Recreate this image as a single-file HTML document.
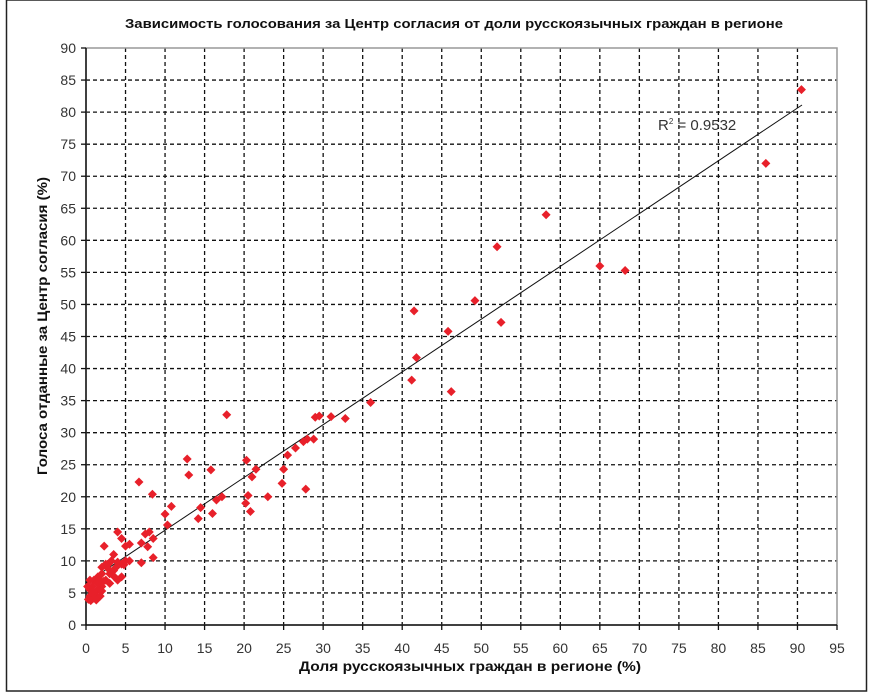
<!DOCTYPE html>
<html><head><meta charset="utf-8"><style>
html,body{margin:0;padding:0;background:#fff;}
svg{display:block;}
text{font-family:"Liberation Sans",Arial,sans-serif;}
</style></head><body>
<svg id="s" width="869" height="697" viewBox="0 0 869 697" xmlns="http://www.w3.org/2000/svg">
<rect x="6.5" y="0" width="860" height="691" fill="#fff" stroke="#222" stroke-width="1.5"/>
<text x="454" y="28" text-anchor="middle" font-size="13" font-weight="bold" fill="#111" textLength="658" lengthAdjust="spacingAndGlyphs">Зависимость голосования за Центр согласия от доли русскоязычных граждан в регионе</text>
<g id="grid"></g>
<rect x="86" y="48" width="751" height="577" fill="none" stroke="#999" stroke-width="1.5"/>
<line x1="86" y1="48" x2="86" y2="625" stroke="#111" stroke-width="1.5"/>
<line x1="86" y1="625" x2="837" y2="625" stroke="#111" stroke-width="1.5"/>
<g id="ticks"></g>
<line x1="86" y1="583" x2="802" y2="105" stroke="#111" stroke-width="1"/>
<g id="pts" fill="#e8202a"></g>
<text x="658" y="130" font-size="15" fill="#333">R<tspan dy="-6" font-size="8">2</tspan><tspan dy="6"> = 0.9532</tspan></text>
<text x="470" y="671" text-anchor="middle" font-size="14" font-weight="bold" fill="#111" textLength="342" lengthAdjust="spacingAndGlyphs">Доля русскоязычных граждан в регионе (%)</text>
<text transform="translate(47,326) rotate(-90)" text-anchor="middle" font-size="14" font-weight="bold" fill="#111" textLength="298" lengthAdjust="spacingAndGlyphs">Голоса отданные за Центр согласия (%)</text>
</svg>
<script>
var NS="http://www.w3.org/2000/svg";
function el(t,a,p,txt){var e=document.createElementNS(NS,t);for(var k in a)e.setAttribute(k,a[k]);if(txt!==undefined)e.textContent=txt;document.getElementById(p).appendChild(e);}
function X(v){return 86+v*751/95;}function Y(v){return 625-v*577/90;}
for(var i=1;i<19;i++){el('line',{x1:X(i*5),y1:48,x2:X(i*5),y2:625,stroke:'#111','stroke-width':1.3,'stroke-dasharray':'4,3'},'grid');}
for(var j=1;j<18;j++){el('line',{x1:86,y1:Y(j*5),x2:837,y2:Y(j*5),stroke:'#111','stroke-width':1.3,'stroke-dasharray':'4,3'},'grid');}
for(var i=0;i<=19;i++){el('line',{x1:X(i*5),y1:625,x2:X(i*5),y2:630,stroke:'#111','stroke-width':1.3},'ticks');el('text',{x:X(i*5),y:653,'text-anchor':'middle','font-size':14,fill:'#333'},'ticks',String(i*5));}
for(var j=0;j<=18;j++){el('line',{x1:81,y1:Y(j*5),x2:86,y2:Y(j*5),stroke:'#111','stroke-width':1.3},'ticks');el('text',{x:76,y:Y(j*5)+5,'text-anchor':'end','font-size':14,fill:'#333'},'ticks',String(j*5));}
var d=[[90.5,83.5],[86,72],[68.2,55.3],[65,56],[58.2,64],[52,59],[52.5,47.2],[49.2,50.6],[45.8,45.8],[41.5,49],[41.8,41.7],[41.2,38.2],[46.2,36.4],[36,34.7],[32.8,32.2],[31,32.5],[29.5,32.6],[29,32.4],[28.8,29],[28,29],[27.5,28.6],[26.5,27.6],[25.5,26.5],[25,24.3],[24.8,22.1],[23,20],[27.8,21.2],[21.5,24.3],[21,23.1],[20.3,25.7],[20.5,20.2],[20.2,19],[20.8,17.7],[17.8,32.8],[17.2,20],[16.5,19.5],[15.8,24.2],[16,17.4],[14.5,18.3],[14.2,16.6],[12.8,25.9],[13,23.4],[10.8,18.5],[10,17.3],[10.3,15.6],[8.4,20.4],[6.7,22.3],[7.5,14.2],[8,14.5],[8.5,13.5],[7.8,12.2],[7,12.8],[8.5,10.5],[7,9.7],[5.5,12.6],[5,12.3],[4.5,13.5],[4,14.5],[3.5,11],[2.3,12.3],[5,10],[4.5,9.5],[4,9.8],[3,9.7],[2.5,9.5],[2,9],[3.5,8.5],[3,8],[2,8],[1.5,7.5],[1,7],[0.5,7],[4,7],[4.5,7.5],[3,6.5],[2,6],[1.5,5.5],[1,5],[0.5,4.5],[0.3,4],[1,4.2],[0.5,5.5],[0.2,6],[1.5,6.5],[2.5,7],[0.8,6],[1.2,4.6],[2.8,8.8],[3.2,10],[3.8,9],[4.8,9.4],[5.5,10],[1.8,4.5],[0.6,3.8],[2,5.3],[1.3,3.9],[2.2,6.8],[1.7,7],[0.9,5.2],[3.6,7.5]];
d.forEach(function(p){var x=X(p[0]),y=Y(p[1]);el('path',{d:'M'+x+' '+(y-4.5)+'L'+(x+4.5)+' '+y+'L'+x+' '+(y+4.5)+'L'+(x-4.5)+' '+y+'Z'},'pts');});
</script>
</body></html>
